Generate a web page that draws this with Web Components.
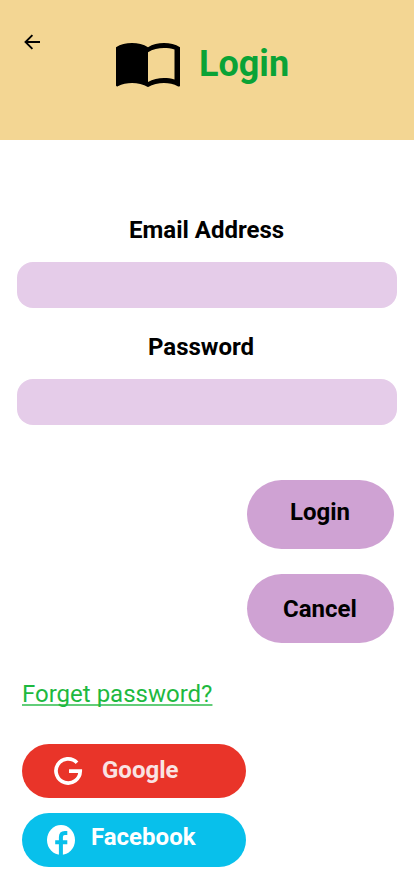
<!DOCTYPE html>
<html lang="en">
<head>
<meta charset="utf-8">
<title>Login</title>
<style>
body{margin:0;background:#fff;font-family:Roboto,sans-serif;color:#000}
</style>
</head>
<body>
<login-screen></login-screen>
<script>
const define = (name, html) => customElements.define(name, class extends HTMLElement {
  constructor() {
    super();
    const t = document.createElement('template');
    t.innerHTML = html;
    this.attachShadow({mode: 'open'}).append(t.content.cloneNode(true));
  }
});

define('app-header', `
<style>
:host{display:flex;align-items:flex-start;box-sizing:border-box;height:140px;background:#f3d693;padding-left:24px}
svg{display:block;flex:none}
.back{margin-top:34px}
.book{margin:43px 0 0 76px}
h1{margin:43px 0 0 19px;font-size:36px;line-height:42px;font-weight:700;color:#0aa336}
</style>
<svg class="back" width="16" height="16" viewBox="0 0 16 16"><path d="M16 8H1.5M8.400 1.100L1.500 8l6.900 6.900" fill="none" stroke="#000" stroke-width="1.900"/></svg>
<svg class="book" width="64" height="44" viewBox="0 0 64 44"><path fill-rule="evenodd" d="M0 4.200C4.500 1 10 0 16 0c5.800 0 11.500 1 16 4.200C36.500 1 42.200 0 48 0s11.500 1 16 4.200v38.200c0 1-.8 1.500-1.800 1C57.500 41 53 40 48 40c-5.400 0-11.600 1.100-16 4.100C27.600 41.100 21.500 40 16 40c-4.800 0-10 1-14.200 3.300-.9.500-1.800 0-1.800-1zM58.500 6.500C55.100 5.400 51.500 5 48 5c-5.400 0-11.500 1.400-16 4.200V39c4.500-2.700 10.600-4 16-4 3.500 0 7.100.4 10.500 1.400z"/></svg>
<h1><slot></slot></h1>`);

define('form-field', `
<style>
:host{display:block}
label{display:block;font-size:24px;line-height:28px;font-weight:700;padding-left:var(--label-x);white-space:nowrap}
.box{height:46px;margin-top:18px;border-radius:16px;background:#e5cce9}
</style>
<label><slot></slot></label><div class="box"></div>`);

define('pill-button', `
<style>
:host{display:block;box-sizing:border-box;width:147px;height:69px;border-radius:34.5px;background:#cfa2d3;padding:var(--pad);font-size:24px;line-height:28px;font-weight:700}
</style>
<slot></slot>`);

define('social-button', `
<style>
:host{display:flex;align-items:flex-start;box-sizing:border-box;width:224px;height:54px;border-radius:27px;font-size:24px;line-height:28px;font-weight:700}
span{padding-top:var(--text-y)}
::slotted(svg){display:block;flex:none}
</style>
<slot name="icon"></slot><span><slot></slot></span>`);

define('login-screen', `
<style>
:host{display:block;height:896px;overflow:hidden}
form{display:flex;flex-direction:column;gap:25px;padding:76px 17px 0;margin:0}
.email{--label-x:112px}
.password{--label-x:131px}
.actions{display:flex;flex-direction:column;align-items:flex-end;gap:25px;padding:55px 20px 0 0}
.login{--pad:18px 0 0 43px}
.cancel{--pad:21px 0 0 36px}
.links{display:flex;flex-direction:column;align-items:flex-start;padding:37px 0 0 22px}
a{font-size:24px;line-height:28px;color:#1eb93f;text-decoration:underline 2px #62cd79;text-underline-offset:2px;text-decoration-skip-ink:none}
.google{margin-top:36px;background:#e93429;color:#f9e3e3;--text-y:12px}
.google svg{margin:13px 20px 0 32px}
.facebook{margin-top:15px;background:#08c0eb;color:#fff;--text-y:10px}
.facebook svg{margin:12px 16px 0 25px}
</style>
<app-header>Login</app-header>
<form>
  <form-field class="email">Email Address</form-field>
  <form-field class="password">Password</form-field>
</form>
<div class="actions">
  <pill-button class="login">Login</pill-button>
  <pill-button class="cancel">Cancel</pill-button>
</div>
<div class="links">
  <a href="#">Forget password?</a>
  <social-button class="google">
    <svg slot="icon" width="28" height="28" viewBox="0 0 28 28" overflow="visible"><path d="M23 5.700A12.100 12.100 0 1 0 26.200 14.200H15" fill="none" stroke="#fff" stroke-width="3.700"/></svg>
    Google
  </social-button>
  <social-button class="facebook">
    <svg slot="icon" width="28" height="30" viewBox="0 0 28 30"><ellipse cx="14" cy="15" rx="14" ry="15" fill="#fff"/><path d="M13.900 31V12Q13.900 7.900 17.800 7.900H20.300M8.200 17.200H20.300" fill="none" stroke="#08c0eb" stroke-width="4"/></svg>
    Facebook
  </social-button>
</div>`);
</script>
</body>
</html>
